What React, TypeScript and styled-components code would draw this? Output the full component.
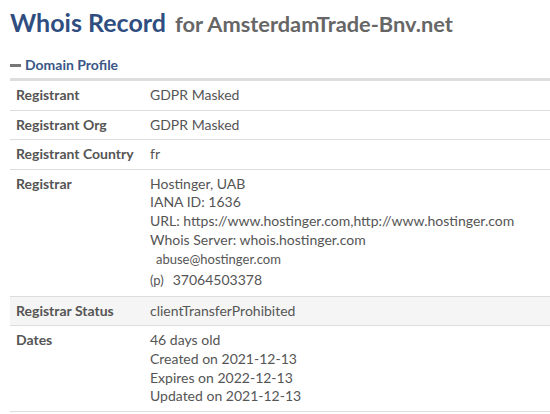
import React from "react";
import styled, { createGlobalStyle } from "styled-components";

const Global = createGlobalStyle`
  html, body { margin: 0; padding: 0; background: #fff; }
  body { font-family: Lato, "Open Sans", sans-serif; color: #555; }
`;

const Page = styled.div`
  padding: 6px 0 0 10px;
`;

const Title = styled.h1`
  margin: 0;
  font-size: 25px;
  font-weight: 700;
  color: #2f4e7f;
  line-height: 32px;
  white-space: nowrap;
`;

const Sub = styled.small`
  margin-left: 3px;
  font-size: 21.8px;
  color: #666;
  font-weight: 700;
`;

const SectionHead = styled.div`
  display: flex;
  align-items: center;
  gap: 4px;
  margin-top: 17px;
  padding-bottom: 5px;
  border-bottom: 3px solid #ddd;
  font-size: 14px;
  font-weight: 700;
  color: #3a5786;
  line-height: 16px;
`;

const Dash = styled.span`
  display: inline-block;
  width: 11px;
  height: 3px;
  background: #777;
`;

const Row = styled.div<{ $shade?: boolean }>`
  display: grid;
  grid-template-columns: 134px 1fr;
  padding: 5px 0 5px 6px;
  border-bottom: 1px solid #ddd;
  background: ${(p) => (p.$shade ? "#f5f5f5" : "#fff")};
  font-size: 14px;
  line-height: 18.6px;
`;

const Label = styled.div`
  font-weight: 700;
  color: #555;
`;

const Value = styled.div`
  color: #555;
`;

const Line = styled.div``;

const Contact = styled.div<{ $small?: boolean }>`
  font-size: ${(p) => (p.$small ? "13px" : "14px")};
  line-height: 20.8px;
  padding-left: ${(p) => (p.$small ? "6px" : "0")};
`;

const Phone = styled.span`
  font-size: 13px;
  margin-right: 9px;
`;

const rows: { label: string; lines: string[]; shade?: boolean; contact?: boolean }[] = [
  { label: "Registrant", lines: ["GDPR Masked"] },
  { label: "Registrant Org", lines: ["GDPR Masked"] },
  { label: "Registrant Country", lines: ["fr"] },
  {
    label: "Registrar",
    lines: [
      "Hostinger, UAB",
      "IANA ID: 1636",
      "URL: https://www.hostinger.com,http://www.hostinger.com",
      "Whois Server: whois.hostinger.com",
    ],
    contact: true,
  },
  { label: "Registrar Status", lines: ["clientTransferProhibited"], shade: true },
  {
    label: "Dates",
    lines: ["46 days old", "Created on 2021-12-13", "Expires on 2022-12-13", "Updated on 2021-12-13"],
  },
];

export default function App() {
  return (
    <>
      <Global />
      <Page>
        <Title>
          Whois Record <Sub>for AmsterdamTrade-Bnv.net</Sub>
        </Title>
        <SectionHead>
          <Dash />
          Domain Profile
        </SectionHead>
        {rows.map((r) => (
          <Row key={r.label} $shade={r.shade}>
            <Label>{r.label}</Label>
            <Value>
              {r.lines.map((l) => (
                <Line key={l}>{l}</Line>
              ))}
              {r.contact && (
                <>
                  <Contact $small>abuse@hostinger.com</Contact>
                  <Contact>
                    <Phone>(p)</Phone>37064503378
                  </Contact>
                </>
              )}
            </Value>
          </Row>
        ))}
      </Page>
    </>
  );
}
